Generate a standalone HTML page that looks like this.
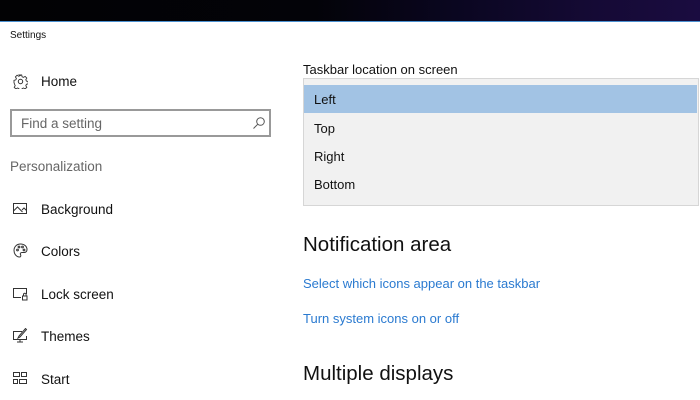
<!DOCTYPE html>
<html><head><meta charset="utf-8"><style>
*{margin:0;padding:0;box-sizing:border-box}
body{width:700px;height:400px;overflow:hidden;background:#fff;font-family:"Segoe UI","Liberation Sans",sans-serif;color:#000;position:relative}
.top{position:absolute;left:0;top:0;width:700px;height:21px;background:linear-gradient(90deg,#020204 0%,#030308 45%,#0a0620 65%,#150a35 85%,#1a0c40 100%)}
.line{position:absolute;left:0;top:21px;width:700px;height:1px;background:#4a90d0}
.t{position:absolute;white-space:nowrap}
svg{position:absolute}
</style></head><body>
<div class="top"></div><div class="line"></div>
<div class="t" style="left:10px;top:30px;font-size:10px;color:#111">Settings</div>
<svg style="left:13px;top:74px" width="15" height="15" viewBox="0 0 15 15" fill="none" stroke="#333" stroke-width="1"><circle cx="7.5" cy="7.5" r="2.2"/><path d="M6.3 1h2.4l.4 1.8 1.4.6 1.6-1 1.7 1.7-1 1.6.6 1.4 1.8.4v2.4l-1.8.4-.6 1.4 1 1.6-1.7 1.7-1.6-1-1.4.6-.4 1.8H6.3l-.4-1.8-1.4-.6-1.6 1-1.7-1.7 1-1.6-.6-1.4L1 8.7V6.3l1.8-.4.6-1.4-1-1.6 1.7-1.7 1.6 1 1.4-.6z" stroke-width=".9"/></svg>
<div class="t" style="left:41px;top:74px;font-size:13.5px;color:#111">Home</div>
<div style="position:absolute;left:10px;top:109px;width:261px;height:28px;border:2px solid #999"></div>
<div class="t" style="left:21px;top:116px;font-size:13.5px;color:#666">Find a setting</div>
<svg style="left:252px;top:116px" width="14" height="14" viewBox="0 0 14 14" fill="none" stroke="#555" stroke-width="1"><circle cx="8.5" cy="5.5" r="3.8"/><path d="M5.8 8.2L1.5 12.5"/></svg>
<div class="t" style="left:10px;top:159px;font-size:13.5px;color:#666">Personalization</div>
<svg style="left:13px;top:202px" width="15" height="14" viewBox="0 0 15 14" fill="none" stroke="#333" stroke-width="1"><rect x=".5" y="1.5" width="13" height="10"/><path d="M.5 9l4-4 5 5M9 8l2-2 2.5 2.5"/></svg>
<div class="t" style="left:41px;top:202px;font-size:13.5px;color:#111">Background</div>
<svg style="left:13px;top:243px" width="15" height="15" viewBox="0 0 15 15" fill="none" stroke="#333" stroke-width="1"><path d="M7.5 1C3.5 1 1 4 1 7.5S3.5 14 6.5 14c1.5 0 1.5-1.5 1-2.5s0-2 1.5-2h2.5C13 9.5 14 8 14 6.5 14 3.5 11.5 1 7.5 1z"/><circle cx="4.5" cy="7" r=".9"/><circle cx="6" cy="4" r=".9"/><circle cx="9.5" cy="4" r=".9"/><circle cx="11" cy="7" r=".9"/></svg>
<div class="t" style="left:41px;top:244px;font-size:13.5px;color:#111">Colors</div>
<svg style="left:13px;top:287px" width="15" height="14" viewBox="0 0 15 14" fill="none" stroke="#333" stroke-width="1"><path d="M8 10.5H.5v-9h13V7"/><rect x="9.5" y="9" width="4.5" height="4"/><path d="M10.5 9V7.5a1.3 1.3 0 0 1 2.6 0V9"/></svg>
<div class="t" style="left:41px;top:287px;font-size:13.5px;color:#111">Lock screen</div>
<svg style="left:13px;top:328px" width="15" height="15" viewBox="0 0 15 15" fill="none" stroke="#333" stroke-width="1"><path d="M9 3.5H.5v8h13V8M4 14h6M7 11.5V14"/><path d="M5 10l2-1 6.5-7.5-1-1L6 8z"/></svg>
<div class="t" style="left:41px;top:329px;font-size:13.5px;color:#111">Themes</div>
<svg style="left:13px;top:372px" width="15" height="13" viewBox="0 0 15 13" fill="none" stroke="#333" stroke-width="1"><rect x=".5" y=".5" width="6" height="4"/><rect x="8.5" y=".5" width="5" height="4"/><rect x=".5" y="7.5" width="4" height="4"/><rect x="6.5" y="7.5" width="7" height="4"/></svg>
<div class="t" style="left:41px;top:372px;font-size:13.5px;color:#111">Start</div>

<div class="t" style="left:303px;top:62px;font-size:13px;color:#111">Taskbar location on screen</div>
<div style="position:absolute;left:303px;top:78px;width:396px;height:128px;background:#f1f1f1;border:1px solid #d6d6d6"></div>
<div style="position:absolute;left:304px;top:85px;width:393px;height:28px;background:#a2c3e4"></div>
<div class="t" style="left:314px;top:92px;font-size:13px;color:#111">Left</div>
<div class="t" style="left:314px;top:121px;font-size:13px;color:#111">Top</div>
<div class="t" style="left:314px;top:149px;font-size:13px;color:#111">Right</div>
<div class="t" style="left:314px;top:177px;font-size:13px;color:#111">Bottom</div>
<div class="t" style="left:303px;top:233px;font-size:20.5px;color:#111">Notification area</div>
<div class="t" style="left:303px;top:276px;font-size:13px;color:#2a7ad0">Select which icons appear on the taskbar</div>
<div class="t" style="left:303px;top:311px;font-size:13px;color:#2a7ad0">Turn system icons on or off</div>
<div class="t" style="left:303px;top:362px;font-size:20.5px;color:#111">Multiple displays</div>
</body></html>
